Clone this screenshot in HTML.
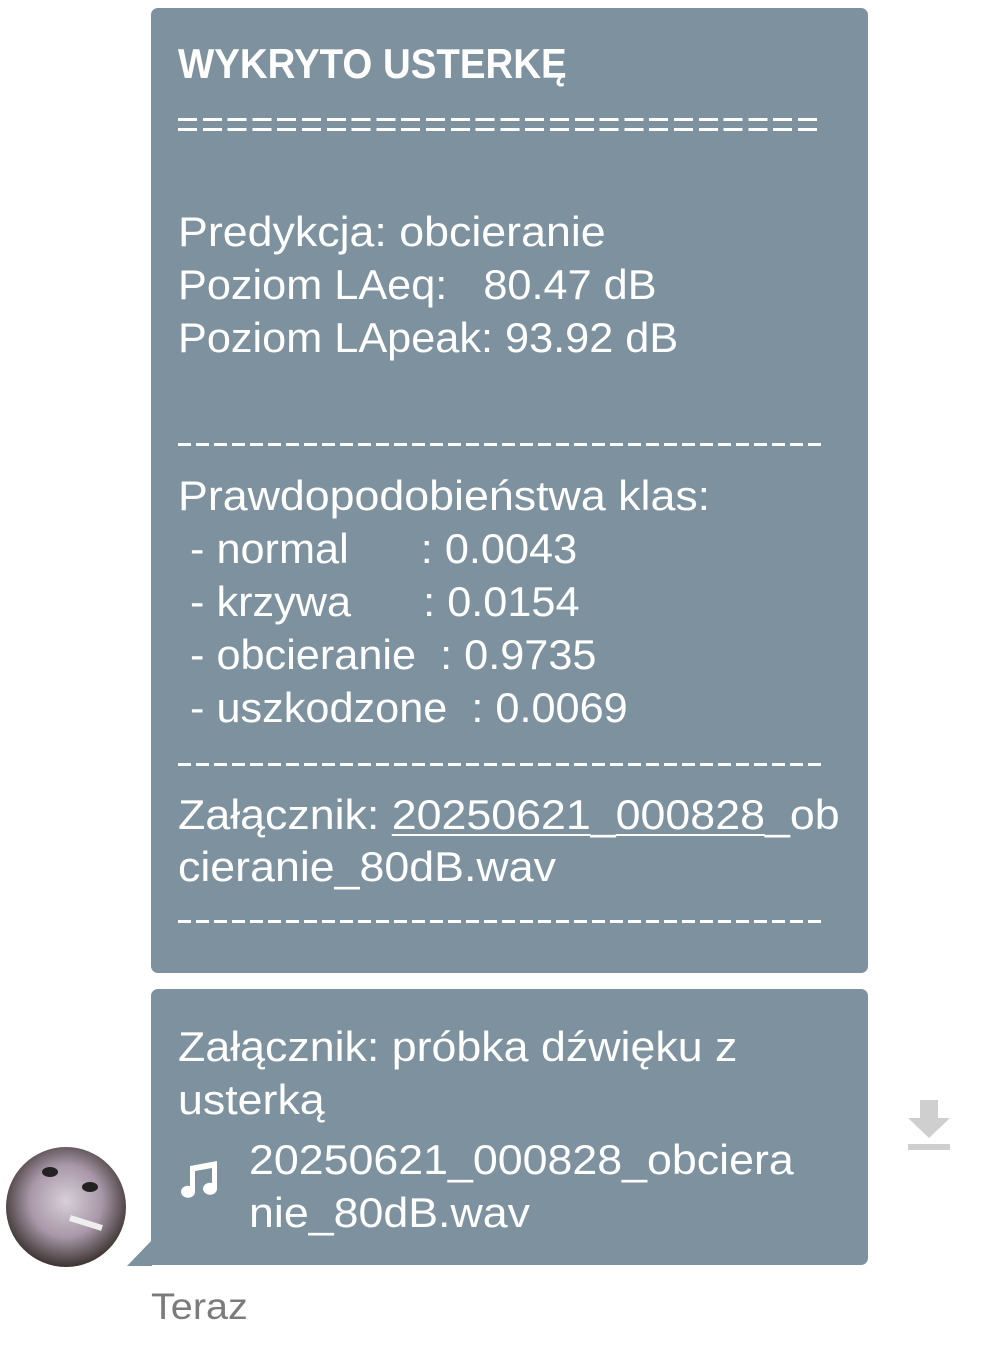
<!DOCTYPE html>
<html><head><meta charset="utf-8"><style>
html,body{margin:0;padding:0;background:#fff;width:1005px;height:1355px;overflow:hidden;position:relative}
.b{position:absolute;background:#7d929e;border-radius:7px}
.t{position:absolute;left:178px;color:#fff;font-family:"Liberation Sans",sans-serif;font-size:42px;line-height:53px;white-space:pre;transform:scaleX(1.065);transform-origin:left center}
.n{transform:scaleX(1.03)}
.dash{position:absolute;left:178px;width:644px;height:3px;background:repeating-linear-gradient(90deg,#fff 0 13px,transparent 13px 18px)}
.eq{position:absolute;left:178px;width:644px;height:3px;background:repeating-linear-gradient(90deg,#fff 0 19px,transparent 19px 24.8px)}
u{text-decoration-thickness:2px;text-underline-offset:5px}
</style></head><body>
<div class="b" style="left:151px;top:8px;width:717px;height:965px"></div>
<div class="b" style="left:151px;top:989px;width:717px;height:276px;border-bottom-left-radius:0"></div>
<svg style="position:absolute;left:0;top:0" width="1005" height="1355">
<polygon points="152,1240 152,1266 127,1266" fill="#7d929e"/>
<defs><radialGradient id="g" cx="50%" cy="45%" r="55%"><stop offset="0" stop-color="#d8cfd8"/><stop offset="0.55" stop-color="#a897a8"/><stop offset="1" stop-color="#3b3330"/></radialGradient></defs>
<circle cx="66" cy="1207" r="60" fill="url(#g)"/>
<ellipse cx="50" cy="1172" rx="8" ry="5" fill="#222"/><ellipse cx="90" cy="1187" rx="8" ry="5" fill="#222"/>
<line x1="70" y1="1218" x2="102" y2="1228" stroke="#eee" stroke-width="6"/>
<path d="M920 1100h18v18h12l-21 20-21-20h12z" fill="#cfcfcf"/>
<rect x="908" y="1144" width="42" height="6" fill="#cfcfcf"/>
<path d="M190 1166l27-5v28a7 6 0 1 1-5-6v-15l-17 3v21a7 6 0 1 1-5-6z" fill="#fff"/>
</svg>
<div class="t" style="top:37px;font-weight:bold;transform:scaleX(0.915)">WYKRYTO USTERKĘ</div>
<div class="eq" style="top:118px"></div><div class="eq" style="top:128px"></div>
<div class="t" style="top:205px">Predykcja: obcieranie</div>
<div class="t n" style="top:258px">Poziom LAeq:   80.47 dB</div>
<div class="t n" style="top:311px">Poziom LApeak: 93.92 dB</div>
<div class="dash" style="top:443px"></div>
<div class="t" style="top:469px">Prawdopodobieństwa klas:</div>
<div class="t n" style="top:522px"> - normal      : 0.0043</div>
<div class="t n" style="top:575px"> - krzywa      : 0.0154</div>
<div class="t n" style="top:628px"> - obcieranie  : 0.9735</div>
<div class="t n" style="top:681px"> - uszkodzone  : 0.0069</div>
<div class="dash" style="top:763px"></div>
<div class="t" style="top:788px">Załącznik: <u>20250621</u>_<u>000828</u>_ob</div>
<div class="t" style="top:840px">cieranie_80dB.wav</div>
<div class="dash" style="top:920px"></div>
<div class="t" style="top:1020px">Załącznik: próbka dźwięku z</div>
<div class="t" style="top:1073px">usterką</div>
<div class="t" style="left:249px;top:1133px">20250621_000828_obciera</div>
<div class="t" style="left:249px;top:1186px">nie_80dB.wav</div>
<div class="t" style="left:151px;top:1284px;color:#7b7b7b;font-size:37px;line-height:46px;transform:scaleX(1.07)">Teraz</div>
</body></html>
